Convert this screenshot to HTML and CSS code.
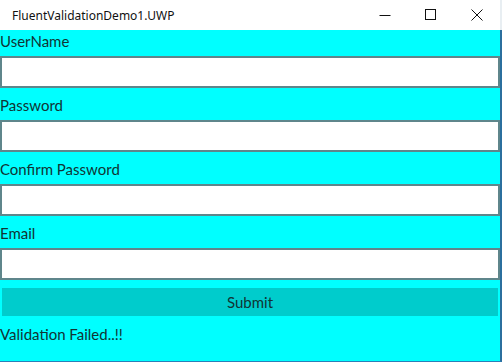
FILE: index.html
```html
<!DOCTYPE html>
<html>
<head>
<meta charset="utf-8">
<link rel="stylesheet" href="styles.css">
</head>
<body>
<div class="window">
  <div class="titlebar">
    <span class="title">FluentValidationDemo1.UWP</span>
    <div class="controls">
      <span class="ctl"><svg width="12" height="12" viewBox="0 0 12 12"><path d="M0.5 6.5H11.5" stroke="#111" stroke-width="1"/></svg></span>
      <span class="ctl"><svg width="12" height="12" viewBox="0 0 12 12"><rect x="0.5" y="0.5" width="10" height="10" fill="none" stroke="#111" stroke-width="1"/></svg></span>
      <span class="ctl"><svg width="12" height="12" viewBox="0 0 12 12"><path d="M0.5 0.5L11.5 11.5M11.5 0.5L0.5 11.5" stroke="#111" stroke-width="1"/></svg></span>
    </div>
  </div>
  <div class="content">
    <div class="label first">UserName</div>
    <div class="input"></div>
    <div class="label">Password</div>
    <div class="input"></div>
    <div class="label">Confirm Password</div>
    <div class="input"></div>
    <div class="label">Email</div>
    <div class="input"></div>
    <div class="btn">Submit</div>
    <div class="msg">Validation Failed..!!</div>
  </div>
</div>
</body>
</html>
```
FILE: styles.css
```css
html, body {
  margin: 0;
  padding: 0;
  background: #ffffff;
}
.window {
  width: 502px;
  height: 362px;
  display: flex;
  flex-direction: column;
  font-family: "Lato", "Noto Sans", sans-serif;
  overflow: hidden;
}
.titlebar {
  height: 30px;
  flex: none;
  background: #ffffff;
  display: flex;
  align-items: center;
  justify-content: space-between;
  border-right: 2px solid #e8eef2;
  box-sizing: border-box;
  font-family: "Noto Sans", sans-serif;
}
.title {
  font-size: 12px;
  color: #111;
  padding-left: 12px;
}
.controls {
  display: flex;
  height: 30px;
}
.ctl {
  width: 46px;
  height: 30px;
  display: flex;
  align-items: center;
  justify-content: center;
}
.content {
  flex: 1;
  background: #00ffff;
  border-right: 2px solid #2b6f9e;
  border-bottom: 1px solid #2b7fb8;
  display: flex;
  flex-direction: column;
  color: #113434;
  font-size: 15px;
}
.label {
  height: 32px;
  box-sizing: border-box;
  display: flex;
  align-items: flex-end;
  padding-bottom: 5px;
  line-height: 20px;
}
.label.first {
  height: 26px;
}
.input {
  height: 32px;
  box-sizing: border-box;
  background: #ffffff;
  border: 2px solid #5f868b;
}
.btn {
  margin: 8px 2px 0 2px;
  height: 28px;
  background: #00cccc;
  display: flex;
  align-items: center;
  justify-content: center;
  line-height: 20px;
}
.msg {
  margin-top: 8px;
  line-height: 20px;
}
```
